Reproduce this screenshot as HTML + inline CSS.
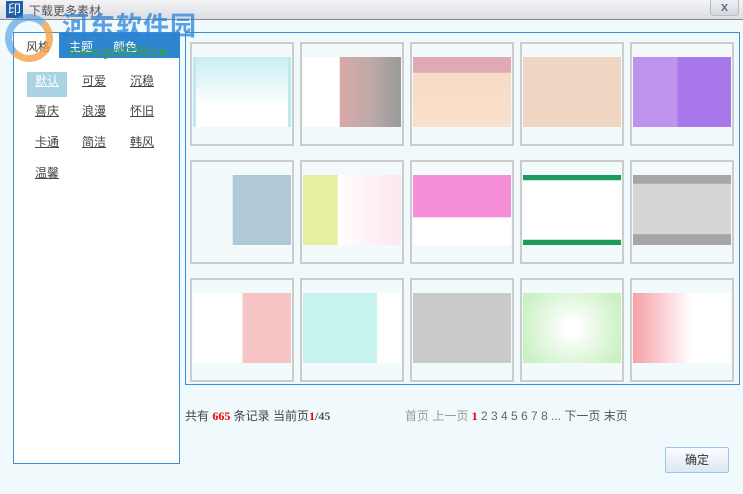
<!DOCTYPE html><html><head><meta charset="utf-8"><style>
*{margin:0;padding:0;box-sizing:border-box}
body{width:743px;height:494px;background:#f0f9fb;font-family:"Liberation Sans","Noto Sans CJK SC",sans-serif;font-size:12px;color:#444;position:relative;overflow:hidden}
.title{position:absolute;left:0;top:0;width:743px;height:20px;background:linear-gradient(#f4f4f6,#dcdde2);border-bottom:1px solid #8a8a8a}
.ico{position:absolute;left:6px;top:1px;width:17px;height:17px;background:#1d5fa8;color:#fff;font-size:13px;line-height:17px;text-align:center}
.tt{position:absolute;left:29px;top:2px;color:#555;font-size:12px}
.close{position:absolute;left:710px;top:0;width:29px;height:16px;border:1px solid #b8bcc6;border-top:none;border-radius:0 0 4px 4px;background:linear-gradient(#eef0f4,#d4d8e0);color:#6a7488;font-weight:bold;text-align:center;line-height:14px;font-size:13px}
.left{position:absolute;left:13px;top:32px;width:167px;height:432px;border:1px solid #3a8fd6;background:#fff}
.tabbar{position:absolute;left:45px;top:0;width:121px;height:25px;background:#2f86d0}
.tab{position:absolute;top:5px;font-size:12px}
.opt{position:absolute;color:#444;text-decoration:underline;font-size:12px}
.grid{position:absolute;left:185px;top:32px;width:555px;height:353px;border:1px solid #3a8fd6}
.t{position:absolute;width:104px;height:104px;border:2px solid #ccc;background:#f2fafc}
.im{position:absolute;left:1px;top:13px;width:98px;height:70px}
.wm1{position:absolute;left:62px;top:6px;font-size:26px;font-weight:bold;color:rgba(40,130,220,.75);letter-spacing:1px}
.wm2{position:absolute;left:68px;top:44px;font-size:15px;font-weight:bold;color:rgba(60,160,60,.85);font-family:"Liberation Serif",serif}
.logo{position:absolute;left:5px;top:14px;width:48px;height:48px;border-radius:50%;border:7px solid rgba(70,150,220,.6);border-bottom-color:rgba(245,160,70,.8);border-right-color:rgba(245,160,70,.8)}
.pg{position:absolute;top:407px;font-size:12px}
.btn{position:absolute;left:665px;top:447px;width:64px;height:26px;border:1px solid #9ec4e6;border-radius:2px;background:linear-gradient(#fbfcfe,#dde7f3);text-align:center;line-height:24px;color:#333}
</style></head><body>
<div class="title"><div class="ico">印</div><div class="tt">下载更多素材</div><div class="close">x</div></div>
<div class="left">
<div class="tabbar"></div>
<div class="tab" style="left:12px;color:#444">风格</div>
<div class="tab" style="left:55px;color:#fff">主题</div>
<div class="tab" style="left:99px;color:#fff">颜色</div>
<div style="position:absolute;left:13px;top:39px;width:40px;height:25px;background:#a9d3e3"></div>
<div class="opt" style="left:21px;top:39px;color:#fff">默认</div><div class="opt" style="left:68px;top:39px">可爱</div><div class="opt" style="left:116px;top:39px">沉稳</div>
<div class="opt" style="left:21px;top:69px">喜庆</div><div class="opt" style="left:68px;top:69px">浪漫</div><div class="opt" style="left:116px;top:69px">怀旧</div>
<div class="opt" style="left:21px;top:100px">卡通</div><div class="opt" style="left:68px;top:100px">简洁</div><div class="opt" style="left:116px;top:100px">韩风</div>
<div class="opt" style="left:21px;top:131px">温馨</div>
</div>
<div class="grid"></div>
<div class="t" style="left:190px;top:42px"><div class="im" style="background:linear-gradient(#c8eef2,#fff 70%);border-left:3px solid #bfe9ee;border-right:3px solid #bfe9ee"></div></div>
<div class="t" style="left:300px;top:42px"><div class="im" style="background:linear-gradient(90deg,#fff 37%,#d9a8a8 38%,#bcaaa8 70%,#999 100%)"></div></div>
<div class="t" style="left:410px;top:42px"><div class="im" style="background:linear-gradient(#dfaab4 0,#dfaab4 22%,#f7dcc6 23%,#f8e0cc)"></div></div>
<div class="t" style="left:520px;top:42px"><div class="im" style="background:#eed6c3"></div></div>
<div class="t" style="left:630px;top:42px"><div class="im" style="background:linear-gradient(90deg,#bd93ee 45%,#a877ea 46%)"></div></div>
<div class="t" style="left:190px;top:160px"><div class="im" style="background:linear-gradient(90deg,#f2fafc 40%,#afcad6 41%)"></div></div>
<div class="t" style="left:300px;top:160px"><div class="im" style="background:linear-gradient(90deg,#e8eea0 35%,#fff 36%,#fde6ef)"></div></div>
<div class="t" style="left:410px;top:160px"><div class="im" style="background:linear-gradient(#f58fd9 60%,#fff 61%)"></div></div>
<div class="t" style="left:520px;top:160px"><div class="im" style="background:linear-gradient(#1d9a5c 7%,#fff 8%,#fff 92%,#1d9a5c 93%)"></div></div>
<div class="t" style="left:630px;top:160px"><div class="im" style="background:linear-gradient(#a6a6a6 12%,#d6d6d6 13%,#d6d6d6 84%,#a6a6a6 85%)"></div></div>
<div class="t" style="left:190px;top:278px"><div class="im" style="background:linear-gradient(90deg,#fff 50%,#f7c4c6 51%)"></div></div>
<div class="t" style="left:300px;top:278px"><div class="im" style="background:linear-gradient(90deg,#c8f4f0 75%,#fff 76%)"></div></div>
<div class="t" style="left:410px;top:278px"><div class="im" style="background:#cacaca"></div></div>
<div class="t" style="left:520px;top:278px"><div class="im" style="background:radial-gradient(circle at 50% 50%,#fff 10%,#c8f0c0 90%)"></div></div>
<div class="t" style="left:630px;top:278px"><div class="im" style="background:linear-gradient(90deg,#f5a0a5,#fff 60%)"></div></div>
<div class="logo"></div>
<div class="wm1">河东软件园</div><div class="wm2">www.pc0359.cn</div>
<div class="pg" style="left:185px">共有 <b style="color:#e00;font-family:'Liberation Serif',serif">665</b> 条记录 当前页<b style="color:#e00;font-family:'Liberation Serif',serif">1</b><b style="color:#555;font-family:'Liberation Serif',serif">/45</b></div>
<div class="pg" style="left:405px;color:#999">首页 上一页 <b style="color:#e00;font-family:'Liberation Serif',serif">1</b> <span style="color:#666">2 3 4 5 6 7 8 ...</span> <span style="color:#555">下一页 末页</span></div>
<div class="btn">确定</div>
</body></html>
